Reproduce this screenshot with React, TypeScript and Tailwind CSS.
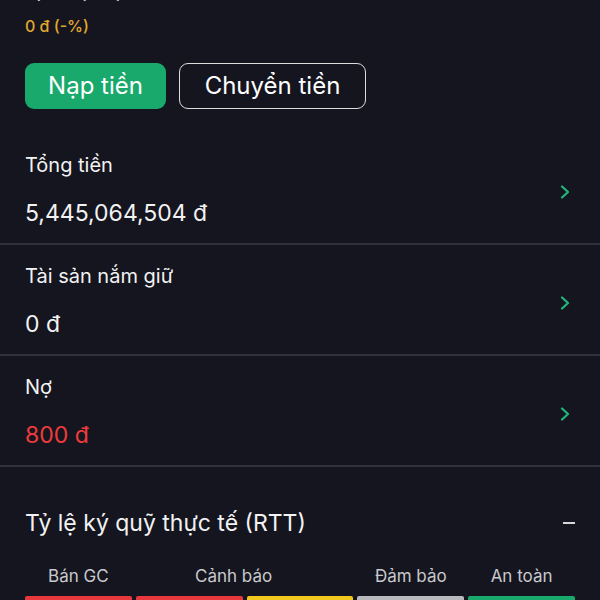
import React from "react";

function Chevron() {
  return (
    <svg width="14" height="16" viewBox="0 0 14 16" fill="none">
      <path d="M4 2.5 L10 8 L4 13.5" stroke="#1fb57a" strokeWidth="2.3" strokeLinecap="round" strokeLinejoin="round" />
    </svg>
  );
}

function Row({ label, value, valueClass }: { label: string; value: string; valueClass: string }) {
  return (
    <div className="flex items-center justify-between border-b-2 border-[#30313c] pl-[25px] pr-[28px] pt-[19px] pb-[16px]">
      <div className="flex flex-col">
        <div className="text-[20px] leading-[24px] text-[#f2f2f2]">{label}</div>
        <div className={`mt-[22px] text-[23px] leading-[28px] ${valueClass}`}>{value}</div>
      </div>
      <div className="mt-[4px]">
        <Chevron />
      </div>
    </div>
  );
}

export default function App() {
  return (
    <div
      className="h-[600px] w-[600px] overflow-hidden bg-[#15151f]"
      style={{ fontFamily: "Inter, 'Noto Sans', sans-serif" }}
    >
      <div className="px-[25px]">
        <div className="mt-[-20px] h-[24px] text-[16px] leading-[24px] text-[#d8d8d8]">Lợi nhuận dự kiến</div>
        <div className="mt-[10px] text-[16px] font-medium leading-[24px] text-[#e2a72e]">0 đ (-%)</div>
        <div className="mt-[25px] flex gap-[13px]">
          <button className="flex h-[46px] w-[141px] items-center justify-center rounded-[9px] bg-[#1aa96c] text-[24px] text-white">
            Nạp tiền
          </button>
          <button className="flex h-[46px] w-[187px] items-center justify-center rounded-[9px] border-[1.5px] border-[#dcdcdc] text-[24px] text-white">
            Chuyển tiền
          </button>
        </div>
      </div>
      <div className="mt-[25px]">
        <Row label="Tổng tiền" value="5,445,064,504 đ" valueClass="text-[#f2f2f2]" />
        <Row label="Tài sản nắm giữ" value="0 đ" valueClass="text-[#f2f2f2]" />
        <Row label="Nợ" value="800 đ" valueClass="text-[#ef3b3b]" />
      </div>
      <div className="px-[25px]">
        <div className="mt-[42px] flex items-center justify-between">
          <div className="text-[23px] leading-[28px] text-[#f2f2f2]">Tỷ lệ ký quỹ thực tế (RTT)</div>
          <div className="h-[2px] w-[12px] bg-[#d8d8d8]" />
        </div>
        <div className="mt-[29px] grid grid-cols-5 gap-x-[4px] text-[17px] leading-[20px] text-[#c9c9cc]">
          <div className="text-center">Bán GC</div>
          <div className="col-span-2 pr-[22px] text-center">Cảnh báo</div>
          <div className="text-center">Đảm bảo</div>
          <div className="text-center">An toàn</div>
        </div>
        <div className="mt-[10px] grid grid-cols-5 gap-x-[4px]">
          <div className="h-[8px] rounded-t-[2px] bg-[#e8383d]" />
          <div className="h-[8px] rounded-t-[2px] bg-[#e8383d]" />
          <div className="h-[8px] rounded-t-[2px] bg-[#f2c81d]" />
          <div className="h-[8px] rounded-t-[2px] bg-[#b9b9bd]" />
          <div className="h-[8px] rounded-t-[2px] bg-[#1aa96c]" />
        </div>
      </div>
    </div>
  );
}
